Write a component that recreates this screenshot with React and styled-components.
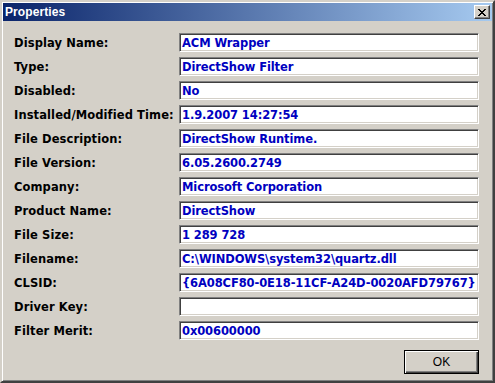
import React from "react";
import styled, { createGlobalStyle } from "styled-components";

const Global = createGlobalStyle`
  html, body { margin: 0; padding: 0; background: #d4d0c8; }
  * { box-sizing: border-box; }
`;

const Window = styled.div`
  width: 495px;
  height: 383px;
  background: #d4d0c8;
  border: 2px solid;
  border-color: #d4d0c8 #404040 #404040 #d4d0c8;
  box-shadow: inset 1px 1px #ffffff, inset -1px -1px #808080;
  padding: 1px;
  display: flex;
  flex-direction: column;
`;

const TitleBar = styled.div`
  height: 18px;
  flex: none;
  display: flex;
  align-items: center;
  justify-content: space-between;
  padding: 0 2px 0 2px;
  background: linear-gradient(to right, #0a246a, #a6caf0);
`;

const Title = styled.span`
  color: #ffffff;
  font: bold 12px "Liberation Sans", Arial, sans-serif;
  letter-spacing: 0.1px;
`;

const CloseButton = styled.div`
  width: 16px;
  height: 14px;
  background: #d4d0c8;
  border: 1px solid;
  border-color: #ffffff #404040 #404040 #ffffff;
  box-shadow: inset -1px -1px #808080;
  display: flex;
  align-items: center;
  justify-content: center;
`;

const Body = styled.div`
  flex: 1;
  display: flex;
  flex-direction: column;
  padding: 12px 13px 0 11px;
`;

const Form = styled.div`
  display: grid;
  grid-template-columns: 165px 300px;
  row-gap: 5px;
`;

const Label = styled.div`
  height: 19px;
  display: flex;
  align-items: center;
  font: bold 11.5px "DejaVu Sans", Verdana, sans-serif;
  letter-spacing: 0.1px;
  color: #000;
  white-space: nowrap;
`;

const Field = styled.div`
  height: 19px;
  background: #fff;
  border: 1px solid;
  border-color: #808080 #ffffff #ffffff #808080;
  box-shadow: inset 1px 1px #404040, inset -1px -1px #d4d0c8;
  display: flex;
  align-items: center;
  padding: 0 0 0 2px;
  font: bold 11.5px "DejaVu Sans", Verdana, sans-serif;
  letter-spacing: -0.1px;
  color: #0000c0;
  white-space: nowrap;
  overflow: hidden;
`;

const Footer = styled.div`
  display: flex;
  justify-content: flex-end;
  padding-top: 10px;
`;

const OkButton = styled.button`
  width: 75px;
  height: 24px;
  background: #d4d0c8;
  border: 1px solid #000;
  box-shadow: inset 1px 1px #ffffff, inset -1px -1px #404040, inset -2px -2px #808080;
  font: 12px "Liberation Sans", Arial, sans-serif;
  color: #000;
  padding: 0;
  margin: 0;
`;

const rows = [
  ["Display Name:", "ACM Wrapper"],
  ["Type:", "DirectShow Filter"],
  ["Disabled:", "No"],
  ["Installed/Modified Time:", "1.9.2007 14:27:54"],
  ["File Description:", "DirectShow Runtime."],
  ["File Version:", "6.05.2600.2749"],
  ["Company:", "Microsoft Corporation"],
  ["Product Name:", "DirectShow"],
  ["File Size:", "1 289 728"],
  ["Filename:", "C:\\WINDOWS\\system32\\quartz.dll"],
  ["CLSID:", "{6A08CF80-0E18-11CF-A24D-0020AFD79767}"],
  ["Driver Key:", ""],
  ["Filter Merit:", "0x00600000"],
];

export default function App() {
  return (
    <>
      <Global />
      <Window>
        <TitleBar>
          <Title>Properties</Title>
          <CloseButton>
            <svg width="8" height="7" viewBox="0 0 8 7">
              <path d="M0 0h2v1h1v1h2V1h1V0h2v1H7v1H6v1H5v1h1v1h1v1h1v1H6V6H5V5H3v1H2v1H0V6h1V5h1V4h1V3H2V2H1V1H0z" fill="#000" />
            </svg>
          </CloseButton>
        </TitleBar>
        <Body>
          <Form>
            {rows.map(([label, value]) => (
              <React.Fragment key={label}>
                <Label>{label}</Label>
                <Field>{value}</Field>
              </React.Fragment>
            ))}
          </Form>
          <Footer>
            <OkButton>OK</OkButton>
          </Footer>
        </Body>
      </Window>
    </>
  );
}
